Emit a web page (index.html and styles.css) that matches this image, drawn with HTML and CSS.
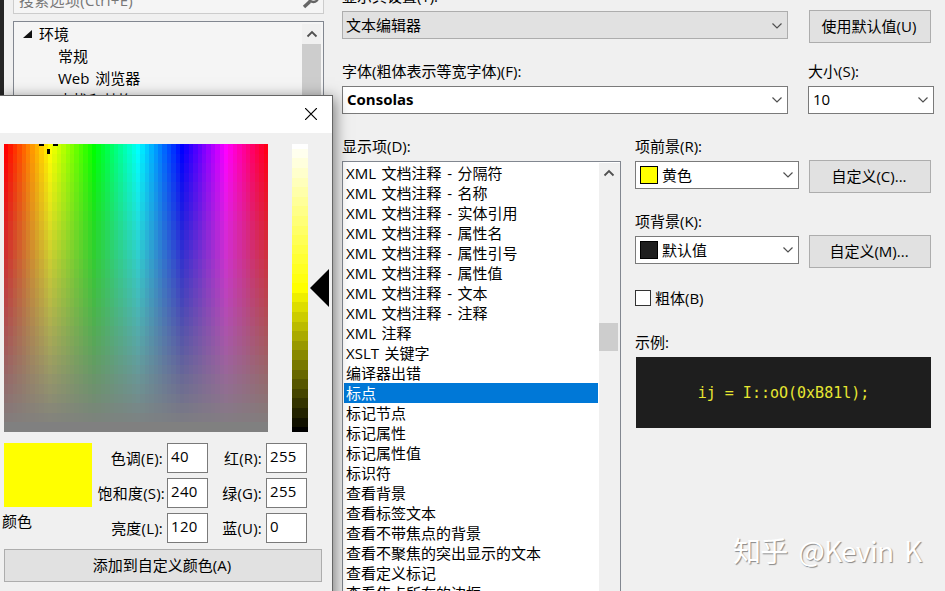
FILE: index.html
```
<!doctype html>
<html lang="zh-CN">
<head>
	<meta charset="utf-8">
	<title>选项</title>
	<link rel="stylesheet" href="styles.css">
</head>
<body>

<div class="options">
	<div class="editor-edge"></div>

	<div class="nav">
		<div class="search">
			<span>搜索选项(Ctrl+E)</span>
			<svg class="search-icon" width="18" height="18" viewBox="0 0 18 18"><circle cx="11.5" cy="6.5" r="4.5" fill="none" stroke="#666" stroke-width="2.4"/><path d="M8 10.5L2 16" stroke="#666" stroke-width="3.4"/></svg>
		</div>
		<div class="tree">
			<ul>
				<li class="root"><svg width="9" height="9"><path d="M9 0v8H0z" fill="#111"/></svg>环境</li>
				<li>常规</li>
				<li>Web 浏览器</li>
				<li>查找和替换</li>
			</ul>
			<div class="scroll">
				<svg class="up" width="12" height="8"><path d="M1.5 6.5L6 2l4.5 4.5"/></svg>
				<div class="thumb"></div>
			</div>
		</div>
	</div>

	<div class="page">
		<div class="row">
			<div class="field wide">
				<label>显示其设置(T):</label>
				<div class="combo disabled"><span>文本编辑器</span><svg class="down" width="12" height="8"><path d="M1.5 1.5L6 6l4.5-4.5"/></svg></div>
			</div>
			<button>使用默认值(U)</button>
		</div>
		<div class="row">
			<div class="field wide">
				<label>字体(粗体表示等宽字体)(F):</label>
				<div class="combo"><b>Consolas</b><svg class="down" width="12" height="8"><path d="M1.5 1.5L6 6l4.5-4.5"/></svg></div>
			</div>
			<div class="field size">
				<label>大小(S):</label>
				<div class="combo"><span>10</span><svg class="down" width="12" height="8"><path d="M1.5 1.5L6 6l4.5-4.5"/></svg></div>
			</div>
		</div>

		<div class="columns">
			<div class="items">
				<label>显示项(D):</label>
				<div class="list">
					<ul>
						<li>XML 文档注释 - 分隔符</li>
						<li>XML 文档注释 - 名称</li>
						<li>XML 文档注释 - 实体引用</li>
						<li>XML 文档注释 - 属性名</li>
						<li>XML 文档注释 - 属性引号</li>
						<li>XML 文档注释 - 属性值</li>
						<li>XML 文档注释 - 文本</li>
						<li>XML 文档注释 - 注释</li>
						<li>XML 注释</li>
						<li>XSLT 关键字</li>
						<li>编译器出错</li>
						<li class="selected">标点</li>
						<li>标记节点</li>
						<li>标记属性</li>
						<li>标记属性值</li>
						<li>标识符</li>
						<li>查看背景</li>
						<li>查看标签文本</li>
						<li>查看不带焦点的背景</li>
						<li>查看不聚焦的突出显示的文本</li>
						<li>查看定义标记</li>
						<li>查看焦点所在的边框</li>
					</ul>
					<div class="scroll">
						<svg class="up" width="12" height="8"><path d="M1.5 6.5L6 2l4.5 4.5"/></svg>
						<div class="thumb"></div>
					</div>
				</div>
			</div>

			<div class="colors">
				<div class="row">
					<div class="field color">
						<label>项前景(R):</label>
						<div class="combo"><i class="chip yellow"></i><span>黄色</span><svg class="down" width="12" height="8"><path d="M1.5 1.5L6 6l4.5-4.5"/></svg></div>
					</div>
					<button>自定义(C)...</button>
				</div>
				<div class="row">
					<div class="field color">
						<label>项背景(K):</label>
						<div class="combo"><i class="chip dark"></i><span>默认值</span><svg class="down" width="12" height="8"><path d="M1.5 1.5L6 6l4.5-4.5"/></svg></div>
					</div>
					<button>自定义(M)...</button>
				</div>
				<div class="check"><i class="box"></i>粗体(B)</div>
				<label>示例:</label>
				<div class="sample">ij = I::oO(0xB81l);</div>
			</div>
		</div>
	</div>
</div>

<div class="picker">
	<div class="title">
		<svg width="12" height="12"><path d="M0 0l12 12M12 0L0 12" stroke="#000" stroke-width="1.2"/></svg>
	</div>
	<div class="picker-body">
		<div class="spectrum">
			<div class="hue">
				<canvas id="hue" width="264" height="288"></canvas>
				<svg class="cross" width="20" height="12"><path d="M0 0h5v2H0zM14 0h5v2h-5zM8 5h3v5H8z"/></svg>
			</div>
			<canvas id="lum" width="16" height="288"></canvas>
			<svg class="arrow" width="19" height="38"><path d="M19 0v38L0 19z"/></svg>
		</div>
		<div class="values">
			<div class="current">
				<div class="swatch"></div>
				<span>颜色</span>
			</div>
			<div class="numbers">
				<label>色调(E):</label><div class="num">40</div>
				<label>红(R):</label><div class="num">255</div>
				<label class="tight">饱和度(S):</label><div class="num">240</div>
				<label>绿(G):</label><div class="num">255</div>
				<label>亮度(L):</label><div class="num">120</div>
				<label>蓝(U):</label><div class="num">0</div>
			</div>
		</div>
		<button>添加到自定义颜色(A)</button>
	</div>
</div>

<div class="watermark">知乎 @Kevin K</div>

<script src="picker.js"></script>
</body>
</html>
```
FILE: styles.css
```
*{
	box-sizing: border-box;
}
html,body{
	margin: 0;
	width: 945px;
	height: 591px;
	overflow: hidden;
	background: #f0f0f0;
	color: #000;
	font: 15px/20px "Open Sans", "Noto Sans CJK SC", sans-serif;
}
body{
	position: relative;
}
ul{
	list-style: none;
	margin: 0;
	padding: 0;
	flex: 1;
}
svg, canvas{
	display: block;
	flex: none;
}
label, li, span, button{
	white-space: nowrap;
}
button{
	height: 33px;
	padding: 0 2px 2px 0;
	border: 1px solid #adadad;
	background: #e1e1e1;
	color: #000;
	font: inherit;
}
.options{
	display: flex;
	height: 591px;
	overflow: hidden;
}
.editor-edge{
	width: 4px;
	background: #252525;
}

/* left tree */
.nav{
	width: 338px;
	padding: 0 18px 0 9px;
	overflow: hidden;
}
.search{
	display: flex;
	justify-content: space-between;
	height: 28px;
	margin-top: -14px;
	padding: 3px 3px 0 5px;
	border: 1px solid #ccc;
	background: #f5f5f5;
	color: #777;
	letter-spacing: .3px;
}
.search-icon{
	margin-top: 1px;
}
.tree{
	display: flex;
	height: 600px;
	margin-top: 7px;
	padding: 2px;
	border: 1px solid #828790;
	background: #f5f5f5;
}
.tree li{
	height: 22px;
	padding-left: 42px;
	word-spacing: 2px;
}
.tree .root{
	display: flex;
	align-items: center;
	gap: 7px;
	height: 22px;
	padding: 0 0 2px 7px;
}
.scroll{
	display: flex;
	flex-direction: column;
	align-items: center;
	width: 19px;
	background: #f0f0f0;
}
.up, .down{
	fill: none;
	stroke: #505050;
	stroke-width: 1.2;
}
.up{
	margin-top: 6px;
	stroke-width: 1.8;
}
.thumb{
	width: 19px;
	height: 28px;
	background: #cdcdcd;
}
.tree .thumb{
	height: 200px;
	margin-top: 6px;
}

/* settings page */
.page{
	width: 603px;
	margin-top: -14px;
}
.row{
	display: flex;
	align-items: flex-end;
	margin-bottom: 22px;
}
.row button{
	width: 122px;
	margin: 0 0 -4px 21px;
}
.page label{
	display: block;
	height: 25px;
	line-height: 20px;
}
.wide{
	width: 446px;
}
.size{
	width: 126px;
	margin-left: 20px;
}
.color{
	width: 164px;
}
.combo{
	display: flex;
	align-items: center;
	height: 28px;
	padding: 0 4px 2px;
	border: 1px solid #7a7a7a;
	background: #fff;
}
.combo.disabled{
	padding: 0 4px 0 3px;
	border-color: #adadad;
	background: #e1e1e1;
}
.down{
	margin: 2px 0 0 auto;
}
.columns{
	display: flex;
}
.items{
	width: 279px;
}
.list{
	display: flex;
	height: 460px;
	padding: 1px 0 1px 1px;
	border: 1px solid #828790;
	background: #fff;
}
.list li{
	height: 20px;
	margin-right: 1px;
	padding-left: 2px;
	word-spacing: 1.7px;
}
.list .selected{
	background: #0078d7;
	color: #fff;
}
.list .scroll{
	width: 21px;
	align-items: flex-start;
}
.list .up{
	margin-left: 4px;
}
.list .thumb{
	margin-top: 146px;
}
.colors{
	width: 296px;
	margin-left: 14px;
}
.colors .row button{
	margin-left: 10px;
}
.colors .combo{
	padding-bottom: 0;
}
.colors .down{
	margin-top: 0;
}
.chip{
	width: 18px;
	height: 18px;
	margin-right: 4px;
	border: 1px solid #000;
}
.yellow{
	background: #ff0;
}
.dark{
	background: #1e1e1e;
}
.check{
	display: flex;
	align-items: center;
	gap: 4px;
	height: 20px;
	margin: 24px 0 24px;
}
.box{
	width: 16px;
	height: 16px;
	border: 1px solid #333;
	background: #fff;
}
.sample{
	height: 71px;
	margin-left: 1px;
	background: #1e1e1e;
	color: #e6e632;
	font: 15px/73px "DejaVu Sans Mono", monospace;
	text-align: center;
}

/* color picker window */
.picker{
	position: absolute;
	top: 95px;
	left: -1px;
	width: 334px;
	height: 520px;
	border: 1px solid #666;
	background: #f0f0f0;
	box-shadow: 2px 3px 14px rgba(0,0,0,.5);
}
.title{
	display: flex;
	justify-content: flex-end;
	height: 37px;
	padding: 12px 15px 0 0;
	background: #fff;
}
.picker-body{
	padding: 11px 10px 0 4px;
}
.spectrum{
	display: flex;
}
.hue{
	position: relative;
	margin-right: 24px;
}
.cross{
	position: absolute;
	top: 0;
	left: 35px;
}
.arrow{
	margin: 125px 0 0 2px;
}
.values{
	display: flex;
	padding-top: 11px;
}
.current{
	width: 88px;
}
.swatch{
	height: 64px;
	margin-bottom: 4px;
	background: #ff0;
}
.current span{
	margin-left: -2px;
}
.numbers{
	display: grid;
	grid-template-columns: 75px 41px 58px 41px;
	grid-auto-rows: 30px;
	row-gap: 5px;
}
.numbers label{
	padding: 5px 4px 0 0;
	text-align: right;
	letter-spacing: .2px;
}
.numbers .tight{
	padding-right: 2px;
}
.num{
	padding: 2px 0 0 3px;
	border: 1px solid #7a7a7a;
	background: #fff;
	letter-spacing: .3px;
}
.picker-body button{
	width: 318px;
	margin-top: 6px;
}

.watermark{
	position: absolute;
	left: 733px;
	top: 530px;
	color: #fff;
	font: 28px/40px "Noto Sans CJK SC", sans-serif;
	letter-spacing: -.7px;
	word-spacing: 5px;
	text-shadow: 1px 1px 1px #888;
	white-space: nowrap;
}
```
FILE: picker.js
```
// 60 hue columns by 30 saturation rows
var ctx = document.getElementById('hue').getContext('2d');
for(var i=0;i<60;i++){
	for(var j=0;j<30;j++){
		var x = Math.round(i*4.4), y = Math.round(j*9.6);
		ctx.fillStyle = 'hsl(' + i*6 + ',' + (100 - j*100/29) + '%,50%)';
		ctx.fillRect(x, y, 5, 10);
	}
}

// luminosity bar, the first and last steps are half height
var bar = document.getElementById('lum').getContext('2d');
for(var k=0;k<=30;k++){
	bar.fillStyle = 'hsl(60,100%,' + (100 - k*100/30) + '%)';
	bar.fillRect(0, Math.max(0, Math.round((k-.5)*9.6)), 16, 10);
}
```
